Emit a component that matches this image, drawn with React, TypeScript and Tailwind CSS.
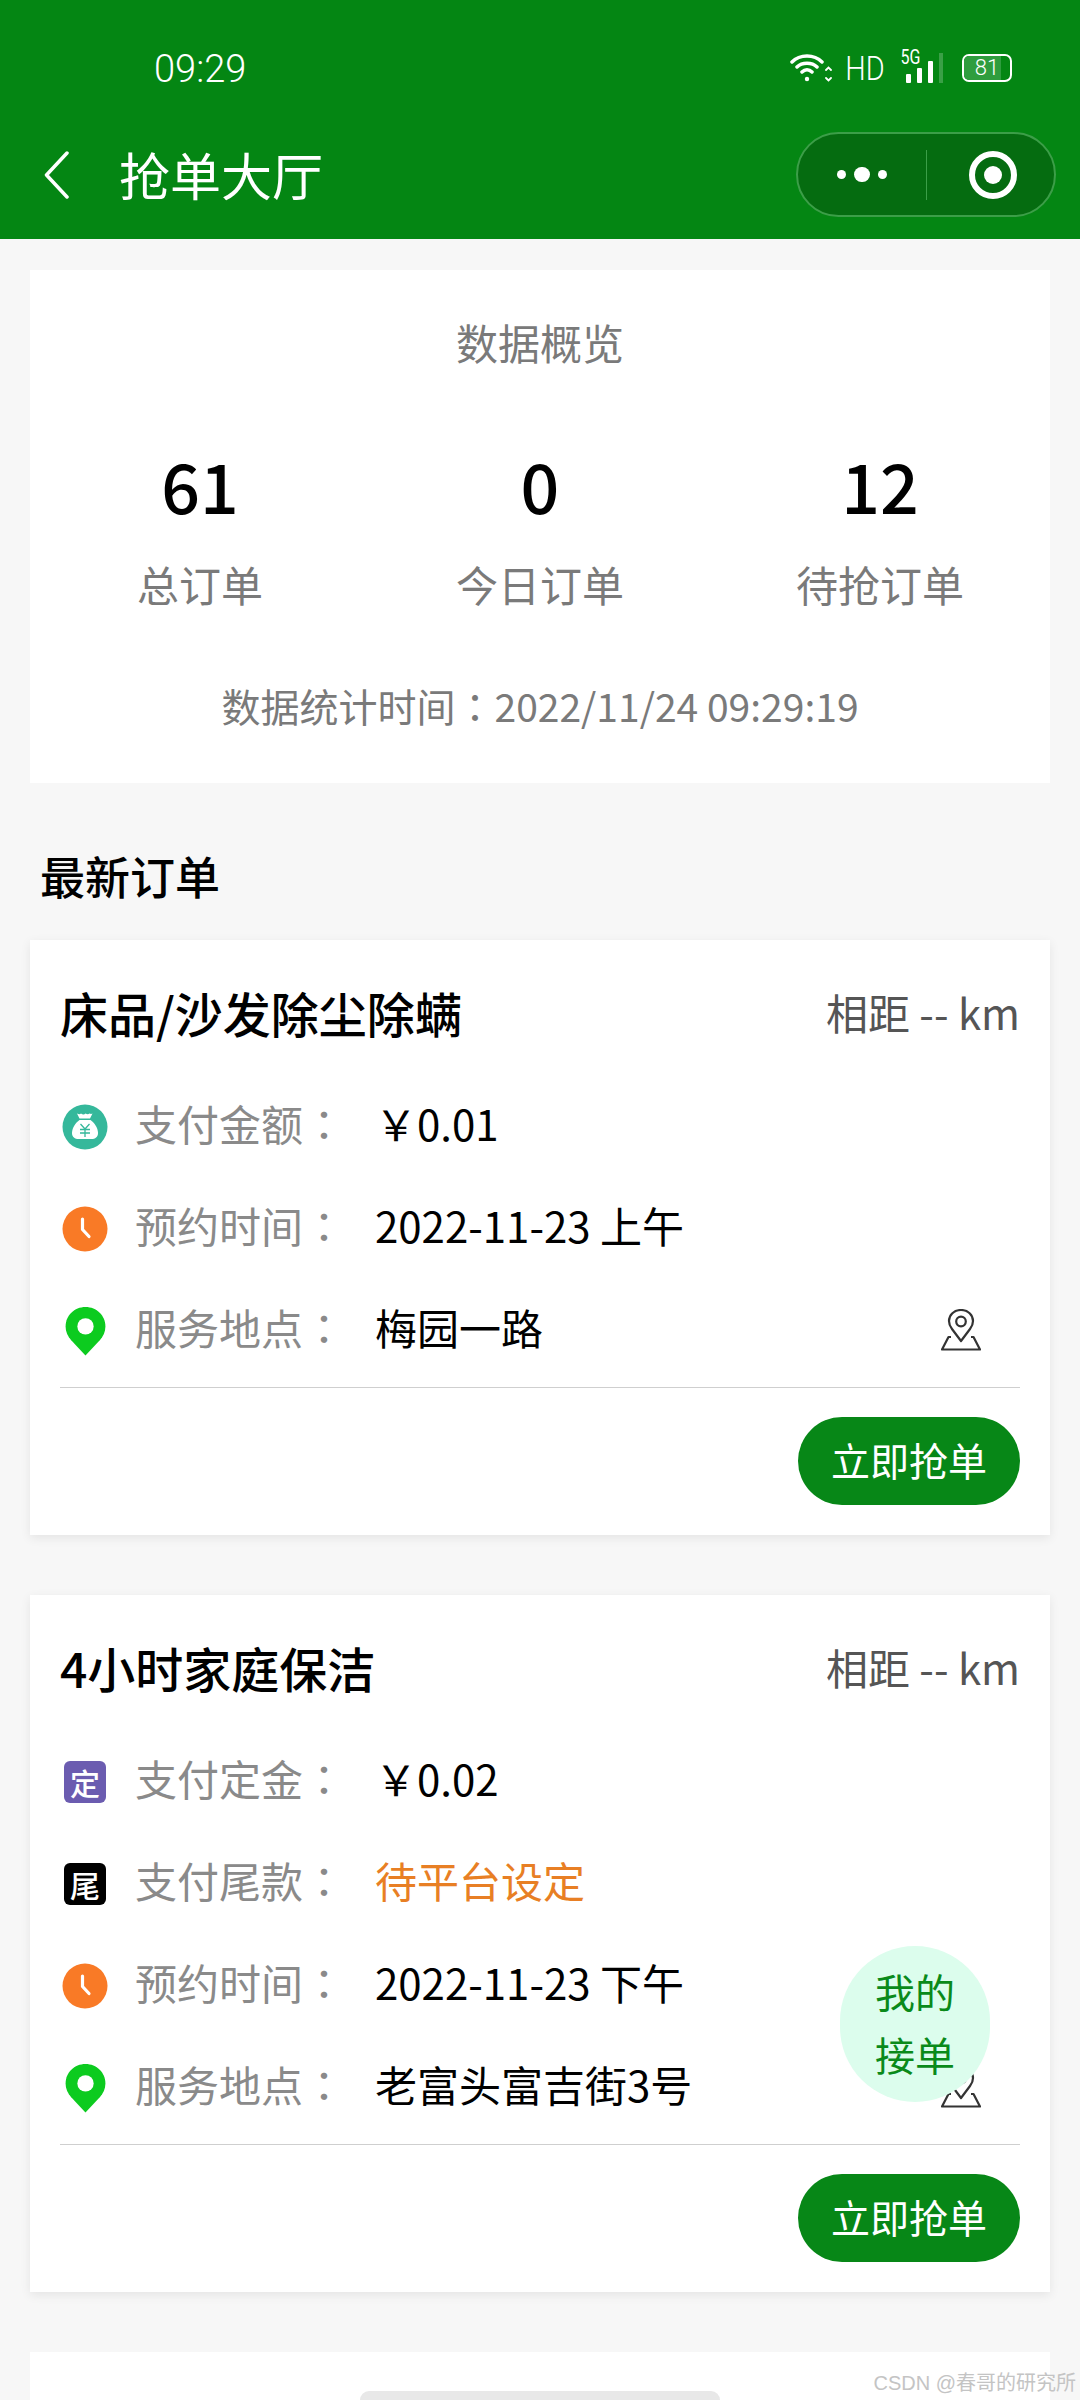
import React from "react";

const FONT = "font-['Noto_Sans_CJK_SC',sans-serif]";

function BagIcon() {
  return (
    <svg width="46" height="46" viewBox="0 0 46 46">
      <circle cx="23" cy="23" r="22.5" fill="#35b89b" />
      <path d="M15 9.5c2 1 3 1 4 0 1.500 1 3 1.500 4.500 0 1.500 1 3 1 4 0 1 .5 2 .5 3 0l-2.500 5h-10.500z" fill="#fff" />
      <path d="M17.500 16h11c4 3 7.500 8 7.500 13 0 4-3 6-6.500 6h-13c-3.500 0-6.500-2-6.500-6 0-5 3.500-10 7.500-13z" fill="#fff" />
      <path d="M18.500 20l4.500 5 4.500-5M18 25.500h10M18 29h10M23 25v8" fill="none" stroke="#35b89b" strokeWidth="1.300" />
    </svg>
  );
}

function ClockIcon() {
  return (
    <svg width="46" height="46" viewBox="0 0 46 46">
      <circle cx="23" cy="23" r="22.500" fill="#f97a26" />
      <path d="M20.500 13v10.500l6.500 7" fill="none" stroke="#fff" strokeWidth="3.200" strokeLinecap="round" strokeLinejoin="round" />
    </svg>
  );
}

function PinIcon() {
  return (
    <svg width="41" height="49" viewBox="0 0 40 48">
      <path d="M20 0C9 0 .500 8.500.500 19c0 5.500 2.200 9.800 5.500 13.500L20 47.500l14-15c3.300-3.700 5.500-8 5.500-13.500C39.500 8.500 31 0 20 0z" fill="#0ccb1f" />
      <circle cx="20" cy="19" r="8" fill="#fff" />
    </svg>
  );
}

function MapIcon() {
  return (
    <svg width="40" height="42" viewBox="0 0 40 42" fill="none" stroke="#333" strokeWidth="2.200" strokeLinejoin="round">
      <path d="M20 1c-7 0-12 5-12 11 0 3 1 5.500 3 8l9 12 9-12c2-2.500 3-5 3-8 0-6-5-11-12-11z" />
      <circle cx="20" cy="12.500" r="4.800" />
      <path d="M10 28H7.500L1 40.500h38L32.500 28H30" />
    </svg>
  );
}

function Badge({ text, color }: { text: string; color: string }) {
  return (
    <div className={`w-[42px] h-[42px] rounded-[6px] flex items-center justify-center text-white text-[30px] font-medium leading-none ${color}`}>
      {text}
    </div>
  );
}

function Row({ icon, label, children }: { icon: React.ReactNode; label: string; children: React.ReactNode }) {
  return (
    <div className="h-[102px] flex items-center">
      <div className="w-[46px] ml-[2px] flex items-center justify-center">{icon}</div>
      <div className="ml-[27px] w-[240px] text-[42px] leading-none text-[#8a8a8a] flex -translate-y-[4px]">
        {label}
        <span className="font-['Noto_Sans_CJK_TC',sans-serif]">：</span>
      </div>
      <div className="-translate-y-[4px]">{children}</div>
    </div>
  );
}

function OrderCard({ title, rows }: { title: string; rows: React.ReactNode }) {
  return (
    <div className="bg-white shadow-[0_3px_10px_rgba(0,0,0,0.08)] px-[30px]">
      <div className="pt-[26px] pb-[4px] mb-[14px] h-[122px] flex items-center justify-between">
        <div className="text-[48px] font-medium text-black leading-none">{title}</div>
        <div className="text-[42px] text-[#555] leading-none">相距 -- km</div>
      </div>
      <div className="relative">
        {rows}
        <div className="absolute right-[39px] bottom-[31px]">
          <MapIcon />
        </div>
      </div>
      <div className="mt-[5px] border-t border-[#cfcfcf]" />
      <div className="pt-[29px] pb-[30px] flex justify-end">
        <div className="w-[222px] h-[88px] pb-[3px] rounded-full bg-[#078717] text-white text-[39px] flex items-center justify-center leading-none">
          立即抢单
        </div>
      </div>
    </div>
  );
}

function Value({ children, className = "text-black" }: { children: React.ReactNode; className?: string }) {
  return <div className={`text-[42px] leading-none ${className}`}>{children}</div>;
}

function Stat({ value, label }: { value: string; label: string }) {
  return (
    <div className="flex flex-col items-center">
      <div className="h-[70px] flex items-center text-[68px] font-medium text-black leading-none">{value}</div>
      <div className="mt-[43px] text-[42px] text-[#7a7a7a] leading-none">{label}</div>
    </div>
  );
}

export default function App() {
  return (
    <div className={`relative w-[1080px] h-[2400px] overflow-hidden bg-[#f7f7f7] flex flex-col ${FONT}`}>
      {/* header */}
      <div className="h-[239px] bg-[#048613] text-white shrink-0">
        <div className="h-[132px] flex items-start pl-[154px] pr-[68px] pt-[48px] justify-between">
          <div className="text-[38px] leading-[42px] font-['Roboto',sans-serif] font-light">09:29</div>
          <div className="flex items-center gap-[14px] h-[30px] mt-[5px]">
            <svg width="42" height="32" viewBox="0 0 42 32" fill="none" stroke="#fff" strokeWidth="3.500" strokeLinecap="round">
              <path d="M2 10c8-8 22-8 30 0M7 15c5-5 15-5 20 0M12 20c3-3 7-3 10 0" />
              <circle cx="17" cy="27" r="2.200" fill="#fff" stroke="none" />
              <path d="M36 18l2.500-2.500 2.500 2.500M36 26l2.500 2.500 2.500-2.500" strokeWidth="1.800" />
            </svg>
            <div className="text-[34px] leading-none font-['Roboto',sans-serif] font-light scale-x-[0.85] w-[38px] flex justify-center">HD</div>
            <div className="relative w-[46px] h-[30px] ml-[2px]">
              <div className="absolute left-[-2px] top-[-6px] text-[20px] leading-none font-['Roboto',sans-serif] scale-x-[0.8]">5G</div>
              <div className="absolute left-[6px] bottom-0 w-[5px] h-[9px] bg-white rounded-[1px]" />
              <div className="absolute left-[17px] bottom-0 w-[5px] h-[15px] bg-white rounded-[1px]" />
              <div className="absolute left-[28px] bottom-0 w-[5px] h-[22px] bg-white rounded-[1px]" />
              <div className="absolute left-[39px] bottom-0 w-[4px] h-[30px] bg-[#3aa046]" />
            </div>
            <div className="relative w-[50px] h-[28px] ml-[2px] rounded-[7px] border-[2px] border-white overflow-hidden flex items-center justify-center">
              <div className="absolute left-0 top-0 bottom-0 w-[37px] bg-[#2f9d3e]" />
              <div className="relative text-[22px] leading-none font-['Roboto',sans-serif] font-light">81</div>
            </div>
          </div>
        </div>
        <div className="h-[85px] flex items-center">
          <svg className="ml-[44px]" width="26" height="48" viewBox="0 0 26 48" fill="none" stroke="#fff" strokeWidth="3.500" strokeLinecap="round" strokeLinejoin="round">
            <path d="M23 2L2.500 24 23 46" />
          </svg>
          <div className="ml-[49px] text-[51px] leading-none">抢单大厅</div>
          <div className="ml-auto mr-[24px] w-[260px] h-[85px] rounded-full bg-[#056c10] border-[2px] border-[#3c9e48] flex items-center">
            <div className="w-[128px] flex items-center justify-center gap-[8px]">
              <div className="w-[9px] h-[9px] rounded-full bg-white" />
              <div className="w-[16px] h-[15px] rounded-full bg-white" />
              <div className="w-[9px] h-[9px] rounded-full bg-white" />
            </div>
            <div className="w-[1px] h-[50px] bg-[#3c9e48]" />
            <div className="flex-1 flex items-center justify-center">
              <div className="w-[48px] h-[48px] rounded-full border-[6px] border-white flex items-center justify-center translate-x-[2px]">
                <div className="w-[18px] h-[18px] rounded-full bg-white" />
              </div>
            </div>
          </div>
        </div>
      </div>

      {/* content */}
      <div className="flex-1 px-[30px] flex flex-col">
        <div className="mt-[31px] h-[513px] bg-white flex flex-col items-center">
          <div className="mt-[51px] text-[42px] text-[#7a7a7a] leading-none">数据概览</div>
          <div className="mt-[87px] w-full grid grid-cols-3">
            <Stat value="61" label="总订单" />
            <Stat value="0" label="今日订单" />
            <Stat value="12" label="待抢订单" />
          </div>
          <div className="mt-[81px] text-[39px] text-[#7a7a7a] leading-none flex">
            数据统计时间
            <span className="font-['Noto_Sans_CJK_TC',sans-serif]">：</span>
            2022/11/24 09:29:19
          </div>
        </div>

        <div className="mt-[68px] ml-[10px] mb-[2px] h-[48px] flex items-center text-[45px] font-medium text-black leading-none">最新订单</div>

        <div className="mt-[39px] flex flex-col gap-[60px]">
          <OrderCard
            title="床品/沙发除尘除螨"
            rows={
              <>
                <Row icon={<BagIcon />} label="支付金额">
                  <Value>￥0.01</Value>
                </Row>
                <Row icon={<ClockIcon />} label="预约时间">
                  <Value>2022-11-23 上午</Value>
                </Row>
                <Row icon={<PinIcon />} label="服务地点">
                  <Value>梅园一路</Value>
                </Row>
              </>
            }
          />
          <OrderCard
            title="4小时家庭保洁"
            rows={
              <>
                <Row icon={<Badge text="定" color="bg-[#6b5cb0]" />} label="支付定金">
                  <Value>￥0.02</Value>
                </Row>
                <Row icon={<Badge text="尾" color="bg-black" />} label="支付尾款">
                  <Value className="text-[#e87f24]">待平台设定</Value>
                </Row>
                <Row icon={<ClockIcon />} label="预约时间">
                  <Value>2022-11-23 下午</Value>
                </Row>
                <Row icon={<PinIcon />} label="服务地点">
                  <Value>老富头富吉街3号</Value>
                </Row>
              </>
            }
          />
        </div>

        <div className="mt-[60px] flex-1 bg-white" />
      </div>

      {/* floating button */}
      <div className="absolute left-[840px] top-[1946px] w-[150px] h-[156px] pb-[3px] rounded-full bg-[#dcfded] flex items-center justify-center text-center text-[#0a8a1a] text-[40px] leading-[63px]">
        我的
        <br />
        接单
      </div>

      <div className="absolute left-[360px] bottom-0 w-[360px] h-[9px] rounded-t-full bg-[#e8e8e8]" />
      <div className="absolute right-[4px] top-[2373px] text-[20px] leading-none text-[#c4c4c4] font-['Liberation_Sans','Noto_Sans_CJK_SC',sans-serif]">
        CSDN @春哥的研究所
      </div>
    </div>
  );
}
